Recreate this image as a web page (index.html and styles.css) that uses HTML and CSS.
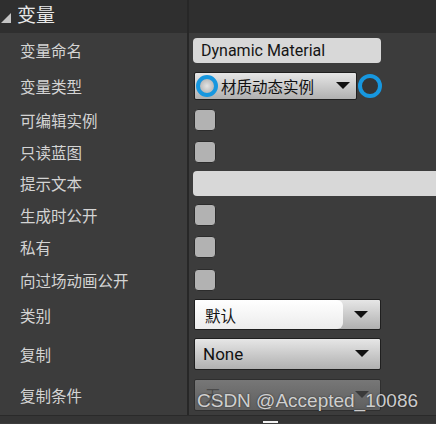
FILE: index.html
```html
<!DOCTYPE html>
<html lang="zh-CN">
<head>
    <meta charset="UTF-8">
    <title>变量</title>
    <link rel="stylesheet" href="styles.css">
</head>
<body>
    <div class="panel">
        <div class="section-header">
            <div class="header-cell">
                <span class="collapse-arrow"></span>
                <span class="section-title">变量</span>
            </div>
            <div class="header-rest"></div>
        </div>

        <div class="row row-name">
            <div class="label">变量命名</div>
            <div class="value">
                <div class="text-box short">Dynamic Material</div>
            </div>
        </div>

        <div class="row row-type">
            <div class="label">变量类型</div>
            <div class="value">
                <div class="combo type-combo">
                    <span class="pin-ring inner"></span>
                    <span class="combo-text">材质动态实例</span>
                    <span class="arrow"></span>
                </div>
                <span class="pin-ring outer"></span>
            </div>
        </div>

        <div class="row row-check">
            <div class="label">可编辑实例</div>
            <div class="value"><span class="checkbox"></span></div>
        </div>

        <div class="row row-check short-row">
            <div class="label">只读蓝图</div>
            <div class="value"><span class="checkbox"></span></div>
        </div>

        <div class="row row-check">
            <div class="label">提示文本</div>
            <div class="value"><div class="text-box wide"></div></div>
        </div>

        <div class="row row-check">
            <div class="label">生成时公开</div>
            <div class="value"><span class="checkbox"></span></div>
        </div>

        <div class="row row-check">
            <div class="label">私有</div>
            <div class="value"><span class="checkbox"></span></div>
        </div>

        <div class="row row-check tall-row">
            <div class="label">向过场动画公开</div>
            <div class="value"><span class="checkbox"></span></div>
        </div>

        <div class="row row-category">
            <div class="label">类别</div>
            <div class="value">
                <div class="combo category-combo">
                    <span class="combo-edit">默认</span>
                    <span class="combo-button"><span class="arrow"></span></span>
                </div>
            </div>
        </div>

        <div class="row row-combo">
            <div class="label">复制</div>
            <div class="value">
                <div class="combo full-combo">
                    <span class="combo-text latin">None</span>
                    <span class="arrow"></span>
                </div>
            </div>
        </div>

        <div class="row row-combo">
            <div class="label">复制条件</div>
            <div class="value">
                <div class="combo full-combo disabled">
                    <span class="combo-text">无</span>
                    <span class="arrow"></span>
                </div>
            </div>
        </div>

        <div class="footer-bar">
            <span class="footer-thumb"></span>
        </div>

        <div class="watermark">CSDN @Accepted_10086</div>
    </div>
</body>
</html>
```

FILE: styles.css
```css
* {
    margin: 0;
    padding: 0;
    box-sizing: border-box;
}

body {
    background: #3c3c3c;
    font-family: "Noto Sans CJK SC", "Noto Sans", sans-serif;
    overflow: hidden;
}

.panel {
    position: relative;
    width: 436px;
    height: 424px;
    background: #3c3c3c;
    overflow: hidden;
}

/* header */
.section-header {
    display: flex;
    height: 33px;
    background: #2f2f2f;
}

.header-cell {
    width: 189px;
    display: flex;
    align-items: center;
    border-right: 2px solid #272727;
}

.header-rest {
    flex: 1;
}

.collapse-arrow {
    width: 0;
    height: 0;
    margin: 2px 6px 0 1px;
    border-left: 10px solid transparent;
    border-bottom: 10px solid #c4c4c4;
}

.section-title {
    font-size: 19px;
    color: #e8e8e8;
    line-height: 1;
    margin-top: -6px;
}

/* rows */
.row {
    display: flex;
    height: 32px;
}

.row-name { height: 34px; }
.row-type { height: 37px; }
.row-check { height: 32px; }
.short-row { height: 31px; }
.tall-row { height: 33px; }
.row-category { height: 37px; }
.row-combo { height: 41px; }

.label {
    width: 189px;
    padding-left: 20px;
    display: flex;
    align-items: center;
    font-size: 15.5px;
    color: #d4d4d4;
    border-right: 2px solid #272727;
}

.value {
    flex: 1;
    display: flex;
    align-items: center;
    padding-left: 4px;
}

/* controls */
.text-box {
    height: 25px;
    background: #d8d8d8;
    border-radius: 4px;
    font-family: Roboto, "Noto Sans", sans-serif;
    font-size: 16px;
    color: #151515;
    display: flex;
    align-items: center;
    padding-left: 8px;
}

.text-box.short {
    width: 188px;
}

.text-box.wide {
    flex: 1;
    margin-right: -10px;
}

.checkbox {
    width: 22px;
    height: 22px;
    margin-left: 1px;
    background: #b2b2b2;
    border: 1px solid #2c2c2c;
    border-radius: 4px;
}

.combo {
    display: flex;
    align-items: center;
    border: 1px solid #1f1f1f;
    border-radius: 2px;
    background: linear-gradient(#e6e6e6, #b0b0b0);
    color: #111;
}

.combo-text {
    flex: 1;
    font-size: 15.5px;
}

.combo-text.latin {
    font-family: Roboto, "Noto Sans", sans-serif;
    font-size: 17px;
    padding-left: 8px;
}

.arrow {
    width: 0;
    height: 0;
    margin-right: 13px;
    border-left: 7px solid transparent;
    border-right: 7px solid transparent;
    border-top: 7px solid #111;
}

.type-combo {
    width: 163px;
    height: 28px;
    margin-left: 1px;
}

.type-combo .arrow {
    margin-right: 6px;
}

.pin-ring {
    border-radius: 50%;
    border: 4px solid #1797df;
}

.pin-ring.inner {
    width: 22px;
    height: 22px;
    margin: 0 3px 0 1px;
    background: radial-gradient(#e4e4e4, #a8a8a8);
}

.pin-ring.outer {
    width: 24px;
    height: 24px;
    margin-left: 1px;
    background: #353535;
}

.category-combo {
    width: 187px;
    height: 31px;
    margin-left: 1px;
    overflow: hidden;
}

.combo-edit {
    flex: 1;
    height: 100%;
    display: flex;
    align-items: center;
    padding-left: 10px;
    font-size: 15.5px;
    background: linear-gradient(#ffffff, #ececec);
    border-radius: 0 6px 6px 0;
}

.combo-button {
    width: 37px;
    height: 100%;
    display: flex;
    align-items: center;
    justify-content: flex-end;
}

.combo-button .arrow {
    margin-right: 12px;
}

.full-combo {
    width: 187px;
    height: 32px;
    margin-left: 1px;
}

.full-combo .arrow {
    margin-right: 11px;
}

.full-combo.disabled {
    background: linear-gradient(#777, #5f5f5f);
    border-color: #2f2f2f;
    color: #4a4a4a;
}

.full-combo.disabled .combo-text {
    padding-left: 10px;
}

.full-combo.disabled .arrow {
    border-top-color: #3a3a3a;
}

/* bottom strip */
.footer-bar {
    position: relative;
    height: 8px;
    background: #353535;
    border-top: 1px solid #2a2a2a;
}

.footer-thumb {
    position: absolute;
    left: 263px;
    bottom: 0;
    width: 15px;
    height: 2px;
    background: #f2f2f2;
}

.watermark {
    position: absolute;
    left: 197px;
    top: 390px;
    font-family: "Liberation Sans", Arial, sans-serif;
    font-size: 19px;
    color: rgba(235, 235, 235, 0.85);
    text-shadow: 0 0 2px rgba(0, 0, 0, 0.6);
    white-space: nowrap;
}
```
